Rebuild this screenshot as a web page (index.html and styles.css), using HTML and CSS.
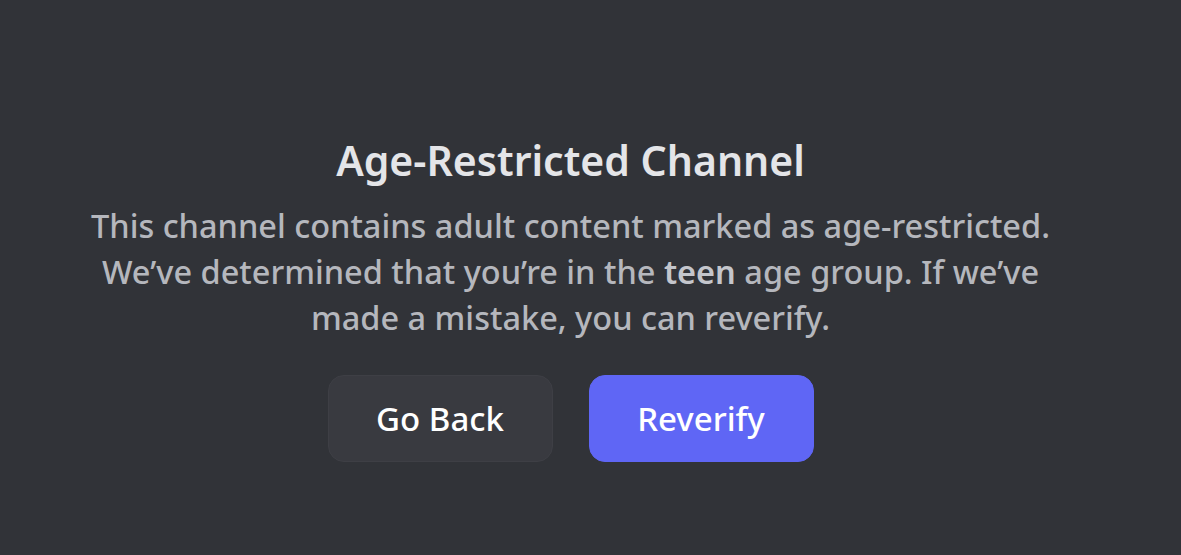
FILE: index.html
```html
<!DOCTYPE html>
<html lang="en">
<head>
<meta charset="utf-8">
<title>Age-Restricted Channel</title>
<link rel="stylesheet" href="styles.css">
</head>
<body>
<main class="page">
  <section class="gate">
    <h1 class="gate-title">Age-Restricted Channel</h1>
    <p class="gate-text">This channel contains adult content marked as age-restricted.<br>We’ve determined that you’re in the <strong>teen</strong> age group. If we’ve<br>made a mistake, you can reverify.</p>
    <div class="gate-actions">
      <button class="btn btn-secondary" type="button">Go Back</button>
      <button class="btn btn-primary" type="button">Reverify</button>
    </div>
  </section>
</main>
</body>
</html>
```
FILE: styles.css
```css
html, body {
  margin: 0;
  height: 100%;
  background: #313338;
}
body {
  font-family: "Noto Sans", "Open Sans", sans-serif;
}
.page {
  height: 100%;
  box-sizing: border-box;
  display: flex;
  justify-content: center;
  padding: 134px 40px 0 0;
}
.gate {
  width: 1100px;
  display: flex;
  flex-direction: column;
  align-items: center;
  text-align: center;
}
.gate-title {
  margin: 0;
  font-size: 41px;
  line-height: 52px;
  font-weight: 600;
  color: #e4e5e8;
}
.gate-text {
  margin: 17px 0 0;
  font-size: 32.5px;
  line-height: 46px;
  font-weight: 500;
  color: #b5b7bd;
}
.gate-text strong {
  font-weight: 600;
  color: #c4c6cc;
}
.gate-actions {
  margin-top: 34px;
  display: flex;
  gap: 36px;
}
.btn {
  width: 225px;
  height: 87px;
  border-radius: 16px;
  font-family: inherit;
  font-size: 33px;
  font-weight: 500;
  color: #ffffff;
  cursor: pointer;
}
.btn-secondary {
  background: #393a40;
  border: 1px solid #3e3f45;
}
.btn-primary {
  background: #5f66f5;
  border: 1px solid #5f66f5;
}
```
